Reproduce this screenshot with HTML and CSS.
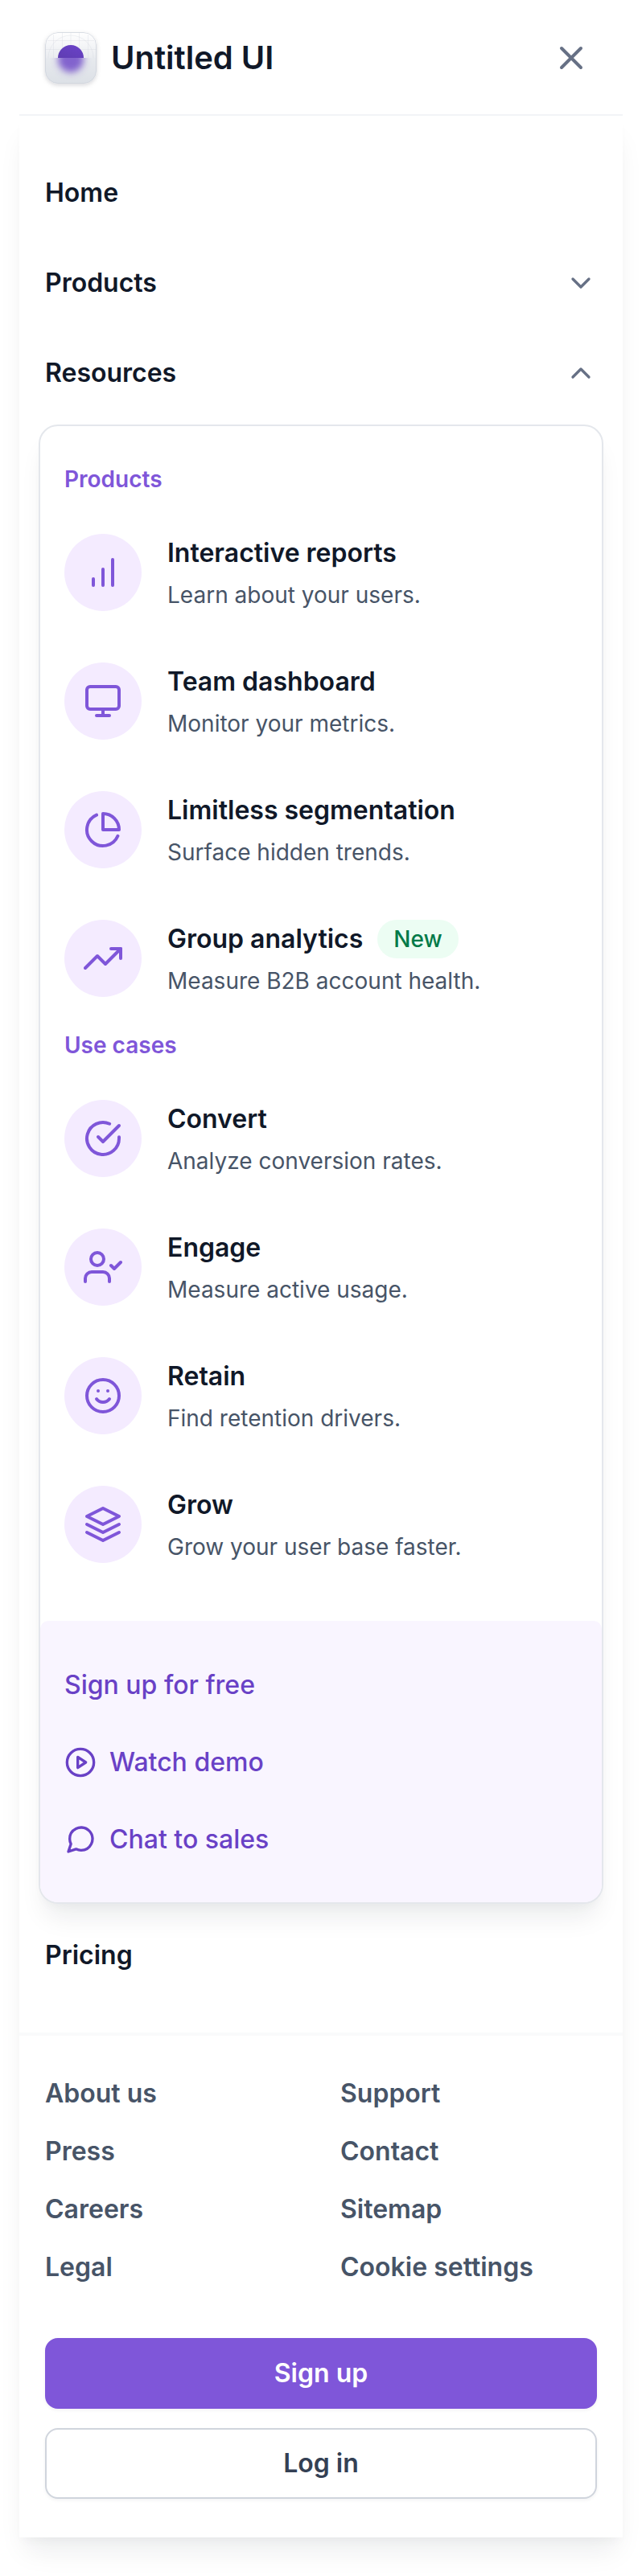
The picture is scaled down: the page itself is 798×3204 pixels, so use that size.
FILE: index.html
```html
<!DOCTYPE html>
<html lang="en">
<head>
<meta charset="utf-8">
<meta name="viewport" content="width=device-width, initial-scale=1">
<title>Untitled UI</title>
<link rel="stylesheet" href="styles.css">
</head>
<body>
<div class="panel">
  <header class="header">
    <a class="brand" href="#">
      <svg class="brand-mark" viewBox="0 0 64 64" aria-hidden="true">
        <defs>
          <linearGradient id="tile" x1="0" y1="0" x2="0" y2="1"><stop offset="0" stop-color="#fff"/><stop offset="1" stop-color="#d5d9e1"/></linearGradient>
          <linearGradient id="orb" x1="0.3" y1="1" x2="0.7" y2="0"><stop offset="0" stop-color="#5a3ba8"/><stop offset="1" stop-color="#6941c6"/></linearGradient>
          <filter id="soft" x="-50%" y="-50%" width="200%" height="200%"><feGaussianBlur stdDeviation="4"/></filter>
          <clipPath id="upper"><rect width="64" height="32"/></clipPath>
          <clipPath id="lower"><rect y="32" width="64" height="32"/></clipPath>
        </defs>
        <rect width="64" height="64" rx="16" fill="url(#tile)"/>
        <g clip-path="url(#upper)">
          <g fill="none" stroke="#d0d5dd" stroke-opacity=".3">
            <path d="M10.500 3V32M21.500 0V32M32 0V32M42.500 0V32M53.500 3V32M3 10.500H61M0 21.500H64"/>
            <circle cx="32" cy="32" r="28"/>
          </g>
          <circle cx="32" cy="32" r="16" fill="url(#orb)"/>
        </g>
        <path d="M0 32H64V48A16 16 0 0 1 48 64H16A16 16 0 0 1 0 48Z" fill="#e4e7ec" fill-opacity=".5"/>
        <g clip-path="url(#lower)"><circle cx="32" cy="34" r="16" fill="#6941c6" fill-opacity=".8" filter="url(#soft)"/></g>
        <rect x=".5" y=".5" width="63" height="63" rx="15.500" fill="none" stroke="#d0d5dd" stroke-opacity=".8"/>
      </svg>
      <span class="brand-name">Untitled UI</span>
    </a>
    <button class="close" type="button" aria-label="Close menu">
      <svg class="icon-lg" viewBox="0 0 24 24" aria-hidden="true"><path d="M18 6L6 18M6 6l12 12"/></svg>
    </button>
  </header>

  <div class="sheet">
    <nav class="nav" aria-label="Main">
      <a class="nav-row" href="#">Home</a>
      <button class="nav-row" type="button" aria-expanded="false">Products
        <svg class="icon-md chevron" viewBox="0 0 20 20" aria-hidden="true"><path d="M5 7.500l5 5 5-5"/></svg>
      </button>
      <button class="nav-row" type="button" aria-expanded="true">Resources
        <svg class="icon-md chevron" viewBox="0 0 20 20" aria-hidden="true"><path d="M15 12.500l-5-5-5 5"/></svg>
      </button>

      <div class="card">
        <div class="card-body">
          <section class="group">
            <h2 class="group-title">Products</h2>
            <div class="items">
              <a class="item" href="#">
                <span class="bubble"><svg class="icon-lg" viewBox="0 0 24 24" aria-hidden="true"><path d="M18 20V4M12 20V10M6 20v-4"/></svg></span>
                <span class="copy"><span class="title">Interactive reports</span><span class="sub">Learn about your users.</span></span>
              </a>
              <a class="item" href="#">
                <span class="bubble"><svg class="icon-lg" viewBox="0 0 24 24" aria-hidden="true"><rect x="2" y="3" width="20" height="14" rx="2"/><path d="M8 21h8M12 17v4"/></svg></span>
                <span class="copy"><span class="title">Team dashboard</span><span class="sub">Monitor your metrics.</span></span>
              </a>
              <a class="item" href="#">
                <span class="bubble"><svg class="icon-lg" viewBox="0 0 24 24" aria-hidden="true"><path d="M21.210 15.890A10 10 0 1 1 8 2.830"/><path d="M22 12A10 10 0 0 0 12 2v10z"/></svg></span>
                <span class="copy"><span class="title">Limitless segmentation</span><span class="sub">Surface hidden trends.</span></span>
              </a>
              <a class="item" href="#">
                <span class="bubble"><svg class="icon-lg" viewBox="0 0 24 24" aria-hidden="true"><path d="M23 6l-9.500 9.500-5-5L1 18"/><path d="M17 6h6v6"/></svg></span>
                <span class="copy"><span class="title">Group analytics <span class="badge">New</span></span><span class="sub">Measure B2B account health.</span></span>
              </a>
            </div>
          </section>
          <section class="group">
            <h2 class="group-title">Use cases</h2>
            <div class="items">
              <a class="item" href="#">
                <span class="bubble"><svg class="icon-lg" viewBox="0 0 24 24" aria-hidden="true"><path d="M22 11.080V12a10 10 0 1 1-5.930-9.140"/><path d="M22 4L12 14.010l-3-3"/></svg></span>
                <span class="copy"><span class="title">Convert</span><span class="sub">Analyze conversion rates.</span></span>
              </a>
              <a class="item" href="#">
                <span class="bubble"><svg class="icon-lg" viewBox="0 0 24 24" aria-hidden="true"><path d="M16 21v-2a4 4 0 0 0-4-4H5a4 4 0 0 0-4 4v2"/><circle cx="8.500" cy="7" r="4"/><path d="M17 11l2 2 4-4"/></svg></span>
                <span class="copy"><span class="title">Engage</span><span class="sub">Measure active usage.</span></span>
              </a>
              <a class="item" href="#">
                <span class="bubble"><svg class="icon-lg" viewBox="0 0 24 24" aria-hidden="true"><circle cx="12" cy="12" r="10"/><path d="M8 14s1.500 2 4 2 4-2 4-2M9 9h.01M15 9h.01"/></svg></span>
                <span class="copy"><span class="title">Retain</span><span class="sub">Find retention drivers.</span></span>
              </a>
              <a class="item" href="#">
                <span class="bubble"><svg class="icon-lg" viewBox="0 0 24 24" aria-hidden="true"><path d="M12 2L2 7l10 5 10-5z"/><path d="M2 17l10 5 10-5M2 12l10 5 10-5"/></svg></span>
                <span class="copy"><span class="title">Grow</span><span class="sub">Grow your user base faster.</span></span>
              </a>
            </div>
          </section>
        </div>
        <div class="card-actions">
          <a class="action" href="#">Sign up for free</a>
          <a class="action" href="#"><svg class="icon-md" viewBox="0 0 24 24" aria-hidden="true"><circle cx="12" cy="12" r="10"/><path d="M10 8l6 4-6 4z"/></svg>Watch demo</a>
          <a class="action" href="#"><svg class="icon-md" viewBox="0 0 24 24" aria-hidden="true"><path d="M21 11.500a8.380 8.380 0 0 1-.9 3.800 8.500 8.500 0 0 1-7.600 4.700 8.380 8.380 0 0 1-3.800-.9L3 21l1.900-5.700a8.380 8.380 0 0 1-.9-3.800 8.500 8.500 0 0 1 4.700-7.600 8.380 8.380 0 0 1 3.800-.9h.5a8.480 8.480 0 0 1 8 8v.5z"/></svg>Chat to sales</a>
        </div>
      </div>

      <a class="nav-row" href="#">Pricing</a>
    </nav>

    <footer class="footer">
      <div class="links">
        <a class="link" href="#">About us</a><a class="link" href="#">Support</a>
        <a class="link" href="#">Press</a><a class="link" href="#">Contact</a>
        <a class="link" href="#">Careers</a><a class="link" href="#">Sitemap</a>
        <a class="link" href="#">Legal</a><a class="link" href="#">Cookie settings</a>
      </div>
      <div class="buttons">
        <button class="btn btn-primary" type="button">Sign up</button>
        <button class="btn btn-secondary" type="button">Log in</button>
      </div>
    </footer>
  </div>
</div>
</body>
</html>
```
FILE: styles.css
```css
* { box-sizing: border-box; }

body {
  margin: 0;
  background: #fff;
  color: #101828;
  font-family: Inter, "Liberation Sans", sans-serif;
  font-size: 32px;
  line-height: 48px;
}

a { color: inherit; text-decoration: none; }

button {
  border: 0;
  padding: 0;
  background: none;
  color: inherit;
  font: inherit;
  cursor: pointer;
}

svg { display: block; flex: none; }

.icon-lg, .icon-md {
  fill: none;
  stroke: currentColor;
  stroke-width: 2;
  stroke-linecap: round;
  stroke-linejoin: round;
}
.icon-lg { width: 48px; height: 48px; }
.icon-md { width: 40px; height: 40px; }
.chevron { stroke: #667085; stroke-width: 1.667; }

.panel { padding: 0 24px 48px; }

.header {
  position: relative;
  display: flex;
  align-items: center;
  justify-content: space-between;
  padding: 40px 32px 38px;
  border-bottom: 2px solid #f2f4f7;
  background: #fff;
}
.brand { display: flex; align-items: center; gap: 18px; }
.brand-mark {
  width: 64px;
  height: 64px;
  border-radius: 16px;
  box-shadow: 0 2px 4px rgba(16, 24, 40, .06), 0 2px 6px rgba(16, 24, 40, .1);
}
.brand-name { font-size: 40px; font-weight: 600; }
.close { padding: 8px; color: #667085; }

.sheet {
  background: #fff;
  box-shadow: 0 24px 32px -8px rgba(16, 24, 40, .08), 0 8px 12px -4px rgba(16, 24, 40, .03);
}

.nav {
  display: flex;
  flex-direction: column;
  gap: 16px;
  padding: 48px 24px;
}
.nav-row {
  display: flex;
  align-items: center;
  justify-content: space-between;
  padding: 24px 8px;
  font-weight: 600;
  text-align: left;
}

.card {
  border: 2px solid #e4e7ec;
  border-radius: 24px;
  background: #fff;
  box-shadow: 0 24px 32px -8px rgba(16, 24, 40, .08), 0 8px 12px -4px rgba(16, 24, 40, .03);
}
.card-body {
  display: flex;
  flex-direction: column;
  gap: 16px;
  padding: 46px 30px 48px;
}
.group { display: flex; flex-direction: column; gap: 24px; }
.group-title {
  margin: 0;
  color: #7f56d9;
  font-size: 28px;
  font-weight: 600;
  line-height: 40px;
}
.items { display: flex; flex-direction: column; gap: 16px; }
.item { display: flex; gap: 32px; padding: 24px 0; }
.bubble {
  display: flex;
  flex: none;
  align-items: center;
  justify-content: center;
  width: 96px;
  height: 96px;
  border-radius: 50%;
  background: #f4ebff;
  color: #7f56d9;
}
.copy { display: flex; flex-direction: column; gap: 8px; }
.title { display: flex; align-items: center; gap: 18px; font-weight: 600; }
.sub { color: #475467; font-size: 28px; line-height: 40px; }
.badge {
  padding: 4px 20px;
  border-radius: 24px;
  background: #ecfdf3;
  color: #027a48;
  font-size: 28px;
  font-weight: 500;
  line-height: 40px;
}

.card-actions {
  display: flex;
  flex-direction: column;
  gap: 48px;
  padding: 56px 30px 54px;
  border-radius: 10px 10px 22px 22px;
  background: #f9f5ff;
}
.action {
  display: flex;
  align-items: center;
  gap: 16px;
  color: #6941c6;
  font-weight: 500;
}

.footer {
  display: flex;
  flex-direction: column;
  gap: 64px;
  padding: 48px 32px;
  border-top: 4px solid #f9fafb;
}
.links {
  display: grid;
  grid-template-columns: 1fr 1fr;
  gap: 24px 48px;
}
.link { color: #475467; font-weight: 600; }
.buttons { display: flex; flex-direction: column; gap: 24px; }
.btn {
  padding: 18px 32px;
  border: 2px solid #7f56d9;
  border-radius: 16px;
  box-shadow: 0 2px 4px rgba(16, 24, 40, .05);
  font-weight: 600;
}
.btn-primary { background: #7f56d9; color: #fff; }
.btn-secondary { border-color: #d0d5dd; background: #fff; color: #344054; }
```
